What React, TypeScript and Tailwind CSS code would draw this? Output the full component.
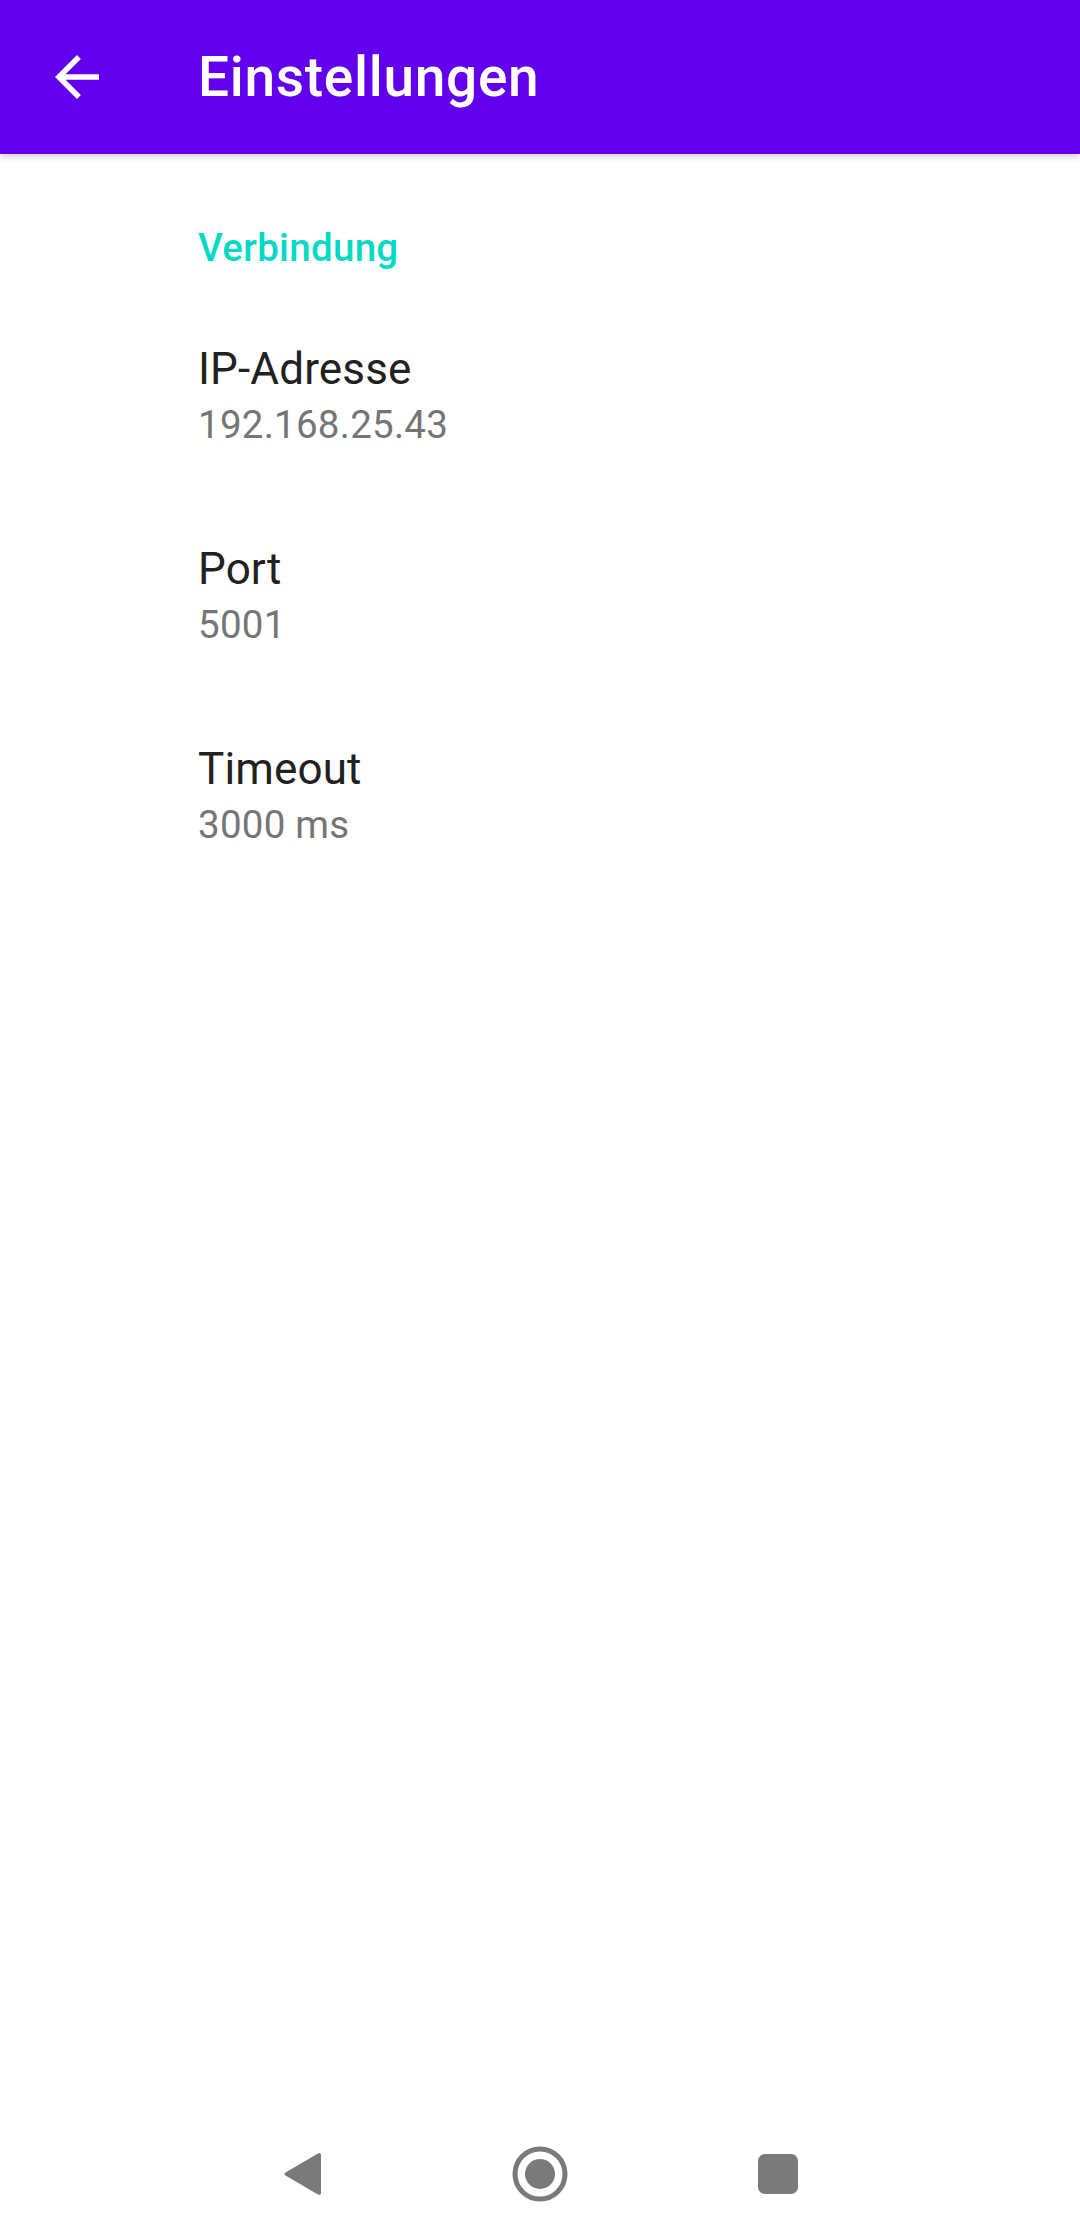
import React from "react";

function BackArrow() {
  return (
    <svg width="66" height="66" viewBox="0 0 24 24" fill="white">
      <path d="M20 11H7.83l5.59-5.59L12 4l-8 8 8 8 1.41-1.41L7.83 13H20v-2z" />
    </svg>
  );
}

function Pref({ title, summary }: { title: string; summary: string }) {
  return (
    <div className="py-[48px] pl-[198px]">
      <div className="text-[44px] leading-[52px] tracking-[0.15px] text-[#212121]">{title}</div>
      <div className="mt-[7px] text-[38.5px] leading-[45px] tracking-[0.25px] text-[#757575]">{summary}</div>
    </div>
  );
}

export default function App() {
  return (
    <div
      className="relative flex h-[2240px] w-[1080px] flex-col overflow-hidden bg-white"
      style={{ fontFamily: "Roboto, 'Noto Sans', sans-serif" }}
    >
      <div className="relative z-10 flex h-[154px] shrink-0 items-center bg-[#6200ee] shadow-[0_3px_6px_rgba(0,0,0,0.18)]">
        <div className="ml-[44px] flex h-[66px] w-[66px] items-center justify-center">
          <BackArrow />
        </div>
        <div className="ml-[88px] text-[55px] font-medium leading-[64px] tracking-[0.7px] text-white">Einstellungen</div>
      </div>

      <div className="flex-1">
        <div className="mt-[71px] pl-[198px] text-[38.5px] font-medium leading-[45px] tracking-[0.3px] text-[#03dac5]">
          Verbindung
        </div>
        <div className="mt-[25px]">
          <Pref title="IP-Adresse" summary="192.168.25.43" />
          <Pref title="Port" summary="5001" />
          <Pref title="Timeout" summary="3000 ms" />
        </div>
      </div>

      <div className="flex h-[132px] shrink-0 items-center justify-center">
        <div className="flex w-[238px] items-center justify-center">
          <svg width="40" height="48" viewBox="0 0 40 48">
            <path
              d="M36 3.5 Q39 2 39 5.5 L39 42.5 Q39 46 36 44.5 L3.5 25.6 Q1.5 24 3.5 22.4 Z"
              fill="#7a7a7a"
            />
          </svg>
        </div>
        <div className="flex w-[238px] items-center justify-center">
          <svg width="56" height="56" viewBox="0 0 56 56">
            <circle cx="28" cy="28" r="25" fill="none" stroke="#7a7a7a" strokeWidth="5" />
            <circle cx="28" cy="28" r="15" fill="#7a7a7a" />
          </svg>
        </div>
        <div className="flex w-[238px] items-center justify-center">
          <div className="h-[40px] w-[40px] rounded-[7px] bg-[#7a7a7a]" />
        </div>
      </div>
    </div>
  );
}
